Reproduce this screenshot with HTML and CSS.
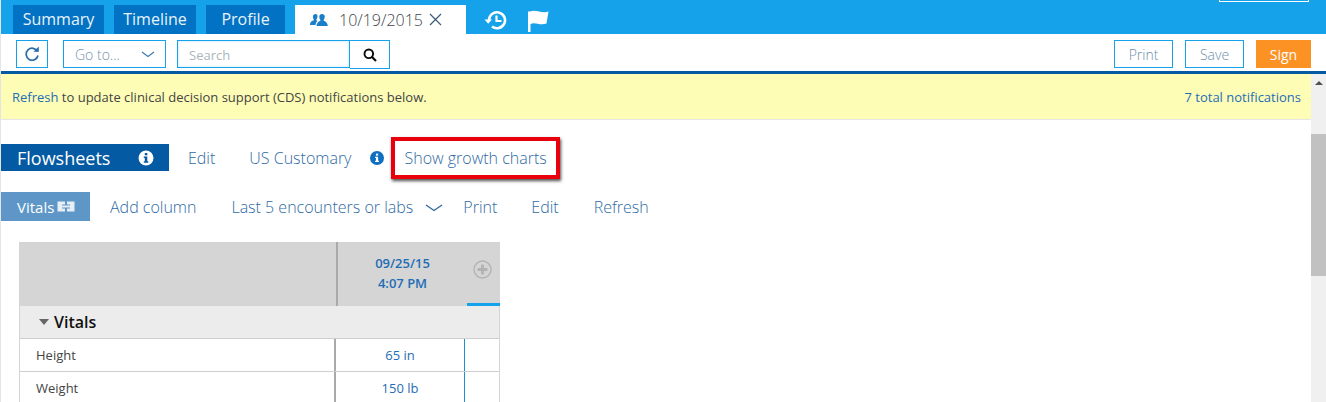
FILE: index.html
```html
<!DOCTYPE html>
<html lang="en">
<head>
    <meta charset="UTF-8">
    <title>Flowsheets</title>
    <link rel="stylesheet" href="styles.css">
</head>
<body>
    <div class="app">
        <div class="edge"></div>
        <div class="main">
            <header class="tab-bar">
                <a class="tab tab-summary">Summary</a>
                <a class="tab tab-timeline">Timeline</a>
                <a class="tab tab-profile">Profile</a>
                <div class="tab-active">
                    <svg class="people-icon" width="18" height="14" viewBox="0 0 18 14">
                        <path fill="#1a7fc9" d="M5.5 1C7 1 7.6 2.2 7.5 3.6 7.4 5 6.9 5.8 6.5 6.3V7.4L7.6 8C6.4 9 5.7 10.500 5.500 12H0C0 9.500 1 8.300 3.700 7.300V6.300C3.200 5.700 2.900 4.800 2.900 3.500 2.900 2 4 1 5.500 1Z"/>
                        <path fill="#1a7fc9" d="M12 1C13.700 1 14.900 2.100 14.800 3.800 14.700 5.200 14.300 6.200 13.700 6.900V7.800C16.300 8.700 17.500 10.200 17.800 13H6.500C6.800 10.200 8 8.700 10.400 7.800V6.900C9.800 6.200 9.300 5.200 9.300 3.800 9.200 2.100 10.400 1 12 1Z"/>
                    </svg>
                    <span class="tab-date">10/19/2015</span>
                    <svg class="close-icon" width="13" height="13" viewBox="0 0 13 13">
                        <path d="M1 1L12 12M12 1L1 12" stroke="#3b5a78" stroke-width="1.200" fill="none"/>
                    </svg>
                </div>
                <svg class="history-icon" width="23" height="20" viewBox="0 0 23 20">
                    <path d="M5 10.500A8 8 0 1 1 8 16.500" fill="none" stroke="#fff" stroke-width="2.600"/>
                    <path d="M0.500 9.500H8L4.200 13.800Z" fill="#fff"/>
                    <path d="M12.500 5.500V11H17.500" fill="none" stroke="#fff" stroke-width="2.200"/>
                </svg>
                <svg class="flag-icon" width="22" height="22" viewBox="0 0 22 22">
                    <path d="M1 1.500V22H3.500V14C8 11.500 13 16 19.500 13.500L21.500 1.500C15 4 9 -1 3 1.500Z" fill="#fff"/>
                </svg>
                <div class="user-box"></div>
            </header>

            <div class="toolbar">
                <button class="btn-refresh">
                    <svg width="16" height="16" viewBox="0 0 16 16">
                        <path d="M13.500 5.500A6 6 0 1 0 14 9.500" fill="none" stroke="#2a6ca8" stroke-width="1.700"/>
                        <path d="M9.500 5.800H14.800V0.600Z" fill="#2a6ca8"/>
                    </svg>
                </button>
                <div class="goto">
                    <span>Go to...</span>
                    <svg width="14" height="7" viewBox="0 0 14 7">
                        <path d="M1 1L7 5.500L13 1" fill="none" stroke="#3f7bb0" stroke-width="1.200"/>
                    </svg>
                </div>
                <div class="search">
                    <div class="search-input">Search</div>
                    <div class="search-btn">
                        <svg width="14" height="14" viewBox="0 0 14 14">
                            <circle cx="5.800" cy="5.800" r="4.300" fill="none" stroke="#0a0a0a" stroke-width="1.900"/>
                            <path d="M9 9L13 13" stroke="#0a0a0a" stroke-width="2.200"/>
                        </svg>
                    </div>
                </div>
                <div class="toolbar-right">
                    <button class="btn-outline btn-print">Print</button>
                    <button class="btn-outline btn-save">Save</button>
                    <button class="btn-sign">Sign</button>
                </div>
            </div>

            <div class="content-row">
                <div class="content">
                    <div class="notice">
                        <p><a>Refresh</a> to update clinical decision support (CDS) notifications below.</p>
                        <a>7 total notifications</a>
                    </div>

                    <div class="sheet-head">
                        <div class="sheet-title">
                            Flowsheets
                            <svg width="16" height="16" viewBox="0 0 16 16">
                                <circle cx="8" cy="8" r="7.500" fill="#fff"/>
                                <rect x="6.800" y="3" width="2.500" height="2.300" fill="#045ba3"/>
                                <path d="M5.800 6.500H9.300V11.200H10.300V12.700H5.800V11.200H6.800V8H5.800Z" fill="#045ba3"/>
                            </svg>
                        </div>
                        <a class="head-link link-edit">Edit</a>
                        <a class="head-link link-units">US Customary</a>
                        <svg class="units-info" width="14" height="14" viewBox="0 0 16 16">
                            <circle cx="8" cy="8" r="8" fill="#0f6fc0"/>
                            <rect x="6.800" y="3" width="2.500" height="2.300" fill="#fff"/>
                            <path d="M5.800 6.500H9.300V11.200H10.300V12.700H5.800V11.200H6.800V8H5.800Z" fill="#fff"/>
                        </svg>
                        <a class="head-link growth">Show growth charts</a>
                    </div>

                    <div class="sub-head">
                        <div class="vitals-tab">
                            Vitals
                            <svg width="18" height="11" viewBox="0 0 18 11">
                                <path d="M0.500 0.500H8V3.500H5V7.500H8V10.500H0.500ZM17.500 0.500H10V3.500H13V7.500H10V10.500H17.500Z" fill="#e6eef6"/>
                                <rect x="5" y="4.500" width="8" height="2" fill="#e6eef6"/>
                            </svg>
                        </div>
                        <a class="sub-link link-add">Add column</a>
                        <a class="sub-link link-last">Last 5 encounters or labs</a>
                        <svg class="last-chevron" width="18" height="8" viewBox="0 0 18 8">
                            <path d="M1 1L9 6.500L17 1" fill="none" stroke="#2f6aa3" stroke-width="1.400"/>
                        </svg>
                        <a class="sub-link link-print">Print</a>
                        <a class="sub-link link-edit2">Edit</a>
                        <a class="sub-link">Refresh</a>
                    </div>

                    <div class="grid">
                        <div class="grid-head">
                            <div class="col-name"></div>
                            <div class="col-date">09/25/15<br>4:07 PM</div>
                            <div class="col-add">
                                <svg width="19" height="19" viewBox="0 0 19 19">
                                    <circle cx="9.500" cy="9.500" r="8.500" fill="none" stroke="#b3b3b3" stroke-width="1.400"/>
                                    <path d="M9.500 4.500V14.500M4.500 9.500H14.500" stroke="#b3b3b3" stroke-width="2.800"/>
                                </svg>
                            </div>
                        </div>
                        <div class="grid-section">
                            <span class="caret"></span>
                            Vitals
                        </div>
                        <div class="grid-row">
                            <div class="col-name">Height</div>
                            <div class="col-value">65 in</div>
                            <div class="col-empty"></div>
                        </div>
                        <div class="grid-row">
                            <div class="col-name">Weight</div>
                            <div class="col-value">150 lb</div>
                            <div class="col-empty"></div>
                        </div>
                    </div>
                </div>

                <div class="scrollbar">
                    <span class="scroll-up"></span>
                    <div class="scroll-thumb"></div>
                </div>
            </div>
        </div>
    </div>
</body>
</html>
```

FILE: styles.css
```css
html, body {
    margin: 0;
    height: 100%;
    overflow: hidden;
}

body {
    font-family: 'Open Sans', 'Liberation Sans', sans-serif;
    font-weight: 300;
    color: #333;
    background-color: #fff;
}

a {
    color: #1f6db5;
}

button {
    font-family: inherit;
    font-weight: inherit;
    cursor: pointer;
}

.app {
    display: flex;
    height: 402px;
}

.edge {
    width: 1px;
    background-color: #e4e4e4;
}

.main {
    flex: 1;
    min-width: 0;
}

/* top tabs */
.tab-bar {
    display: flex;
    align-items: flex-end;
    position: relative;
    height: 34px;
    padding-left: 12px;
    background-color: #15a2ea;
    box-sizing: border-box;
}

.tab {
    height: 29px;
    line-height: 29px;
    text-align: center;
    font-size: 16px;
    font-weight: 400;
    color: #e8f3fa;
    background-color: #0272c4;
}

.tab-summary {
    width: 91px;
    margin-right: 10px;
}

.tab-timeline {
    width: 82px;
    margin-right: 10px;
}

.tab-profile {
    width: 79px;
    margin-right: 10px;
}

.tab-active {
    display: flex;
    align-items: center;
    width: 171px;
    height: 29px;
    padding-left: 15px;
    box-sizing: border-box;
    font-size: 16px;
    background-color: #fff;
}

.tab-date {
    margin-left: 11px;
    color: #444;
}

.close-icon {
    margin-left: 6px;
}

.history-icon {
    margin: 0 0 4px 18px;
}

.flag-icon {
    margin: 0 0 2px 20px;
}

.user-box {
    position: absolute;
    top: -6px;
    right: 17px;
    width: 90px;
    height: 8px;
    border: 1px solid #fff;
    box-sizing: border-box;
}

/* toolbar */
.toolbar {
    display: flex;
    align-items: flex-start;
    height: 40px;
    padding: 6px 15px 0 15px;
    box-sizing: border-box;
    border-bottom: 3px solid #045ba3;
}

.btn-refresh {
    width: 32px;
    height: 28px;
    padding: 0;
    border: 1px solid #15a2ea;
    background-color: #fff;
    display: flex;
    align-items: center;
    justify-content: center;
}

.goto {
    display: flex;
    align-items: center;
    justify-content: space-between;
    width: 103px;
    height: 28px;
    margin-left: 15px;
    padding: 0 10px 0 11px;
    box-sizing: border-box;
    border: 1px solid #15a2ea;
    font-size: 14px;
    color: #7392ae;
}

.search {
    display: flex;
    margin-left: 11px;
}

.search-input {
    width: 173px;
    height: 28px;
    line-height: 28px;
    padding-left: 11px;
    box-sizing: border-box;
    border: 1px solid #15a2ea;
    box-shadow: inset 0 0 3px #bfe3f7;
    font-size: 13px;
    font-weight: 400;
    color: #adb5bb;
}

.search-btn {
    display: flex;
    align-items: center;
    justify-content: center;
    width: 40px;
    height: 29px;
    box-sizing: border-box;
    border: 1px solid #15a2ea;
    border-left: none;
}

.toolbar-right {
    display: flex;
    margin-left: auto;
}

.btn-outline {
    width: 59px;
    height: 28px;
    padding: 0;
    margin-right: 12px;
    border: 1px solid #15a2ea;
    background-color: #fff;
    font-size: 14px;
    color: #6f8fab;
}

.btn-sign {
    width: 55px;
    height: 28px;
    padding: 0;
    border: none;
    background-color: #fd9224;
    font-size: 14px;
    font-weight: 400;
    color: #fff;
}

/* content */
.content-row {
    display: flex;
    height: 328px;
}

.content {
    flex: 1;
    min-width: 0;
    overflow: hidden;
}

.notice {
    display: flex;
    justify-content: space-between;
    align-items: center;
    height: 46px;
    padding: 0 10px 0 11px;
    box-sizing: border-box;
    border-bottom: 1px solid #e6e6e6;
    background-color: #fdfdb6;
    font-size: 13px;
    font-weight: 400;
    color: #444;
}

.notice p {
    margin: 0;
}

.sheet-head {
    display: flex;
    align-items: center;
    height: 27px;
    margin-top: 24px;
}

.sheet-title {
    display: flex;
    align-items: center;
    justify-content: space-between;
    width: 168px;
    height: 27px;
    padding: 0 15px 0 16px;
    box-sizing: border-box;
    background-color: #045ba3;
    font-size: 18px;
    font-weight: 400;
    color: #fff;
}

.head-link {
    font-size: 16px;
    color: #2f6aa3;
}

.link-edit {
    margin-left: 19px;
}

.link-units {
    margin-left: 34px;
}

.units-info {
    margin-left: 19px;
}

.growth {
    position: relative;
    margin-left: 20px;
}

/* red callout drawn over the screenshot */
.growth::after {
    content: "";
    position: absolute;
    top: -10px;
    left: -13px;
    right: -13px;
    bottom: -10px;
    border: 4px solid #e8000d;
    box-shadow: 1px 2px 3px rgba(0, 0, 0, 0.7);
}

.sub-head {
    display: flex;
    align-items: center;
    height: 29px;
    margin-top: 21px;
}

.vitals-tab {
    display: flex;
    align-items: center;
    gap: 3px;
    width: 89px;
    height: 29px;
    padding-left: 16px;
    box-sizing: border-box;
    background-color: #5e97c7;
    font-size: 15px;
    font-weight: 400;
    color: #fff;
}

.sub-link {
    font-size: 16px;
    color: #2f6aa3;
}

.link-add {
    margin-left: 20px;
}

.link-last {
    margin-left: 35px;
}

.last-chevron {
    margin: 3px 0 0 12px;
}

.link-print {
    margin-left: 20px;
}

.link-edit2 {
    margin-left: 34px;
}

.sub-head .sub-link:last-child {
    margin-left: 35px;
}

/* vitals grid */
.grid {
    width: 481px;
    margin: 21px 0 0 18px;
    box-sizing: border-box;
}

.grid-head {
    display: flex;
    height: 64px;
    background-color: #d5d5d5;
}

.grid-head .col-name {
    width: 317px;
    border-right: 2px solid #a9a9a9;
}

.col-date {
    width: 129px;
    padding-top: 11px;
    box-sizing: border-box;
    text-align: center;
    font-size: 13px;
    font-weight: 600;
    line-height: 20px;
    color: #1f6db5;
}

.col-add {
    flex: 1;
    padding: 18px 0 0 6px;
    box-sizing: border-box;
    border-bottom: 3px solid #15a2ea;
}

.grid-section {
    display: flex;
    align-items: center;
    height: 33px;
    padding-left: 19px;
    box-sizing: border-box;
    border-bottom: 1px solid #cfcfcf;
    border-left: 1px solid #d5d5d5;
    border-right: 1px solid #d5d5d5;
    background-color: #ececec;
    font-size: 16px;
    font-weight: 600;
    color: #111;
}

.caret {
    width: 0;
    height: 0;
    margin-right: 5px;
    border-left: 5px solid transparent;
    border-right: 5px solid transparent;
    border-top: 6px solid #666;
}

.grid-row {
    display: flex;
    height: 33px;
    box-sizing: border-box;
    border-bottom: 1px solid #cfcfcf;
    border-left: 1px solid #d5d5d5;
    border-right: 1px solid #d5d5d5;
    font-size: 13px;
    font-weight: 400;
    line-height: 32px;
}

.grid-row .col-name {
    width: 316px;
    padding-left: 16px;
    box-sizing: border-box;
    border-right: 2px solid #a9a9a9;
    color: #444;
}

.col-value {
    width: 129px;
    box-sizing: border-box;
    border-right: 1px solid #1b8fd6;
    text-align: center;
    color: #1f6db5;
}

.col-empty {
    flex: 1;
}

/* page scrollbar */
.scrollbar {
    position: relative;
    width: 15px;
    background-color: #f0f0f0;
}

.scroll-up {
    position: absolute;
    top: 7px;
    left: 4px;
    border-left: 4px solid transparent;
    border-right: 4px solid transparent;
    border-bottom: 4px solid #505050;
}

.scroll-thumb {
    position: absolute;
    top: 60px;
    left: 0;
    width: 15px;
    height: 142px;
    background-color: #c1c1c1;
}
```
